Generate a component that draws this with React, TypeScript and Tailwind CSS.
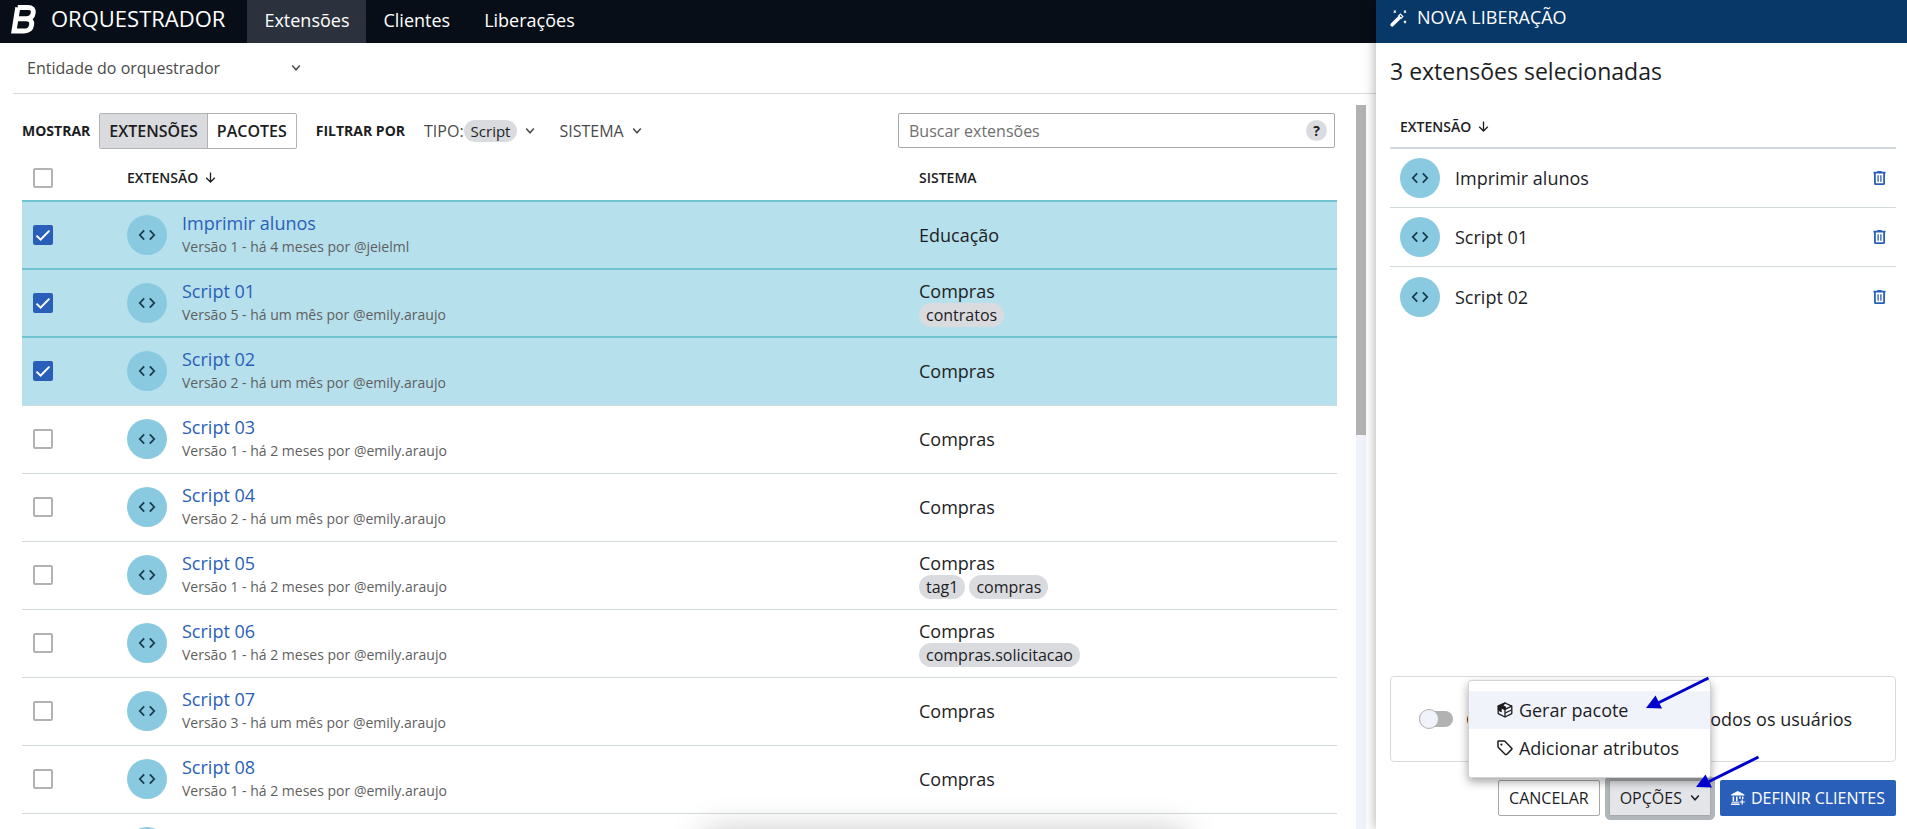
import { useState } from "react";

const rows = [
  { name: "Imprimir alunos", info: "Versão 1 - há 4 meses por @jeielml", system: "Educação", tags: [] as string[] },
  { name: "Script 01", info: "Versão 5 - há um mês por @emily.araujo", system: "Compras", tags: ["contratos"] },
  { name: "Script 02", info: "Versão 2 - há um mês por @emily.araujo", system: "Compras", tags: [] },
  { name: "Script 03", info: "Versão 1 - há 2 meses por @emily.araujo", system: "Compras", tags: [] },
  { name: "Script 04", info: "Versão 2 - há um mês por @emily.araujo", system: "Compras", tags: [] },
  { name: "Script 05", info: "Versão 1 - há 2 meses por @emily.araujo", system: "Compras", tags: ["tag1", "compras"] },
  { name: "Script 06", info: "Versão 1 - há 2 meses por @emily.araujo", system: "Compras", tags: ["compras.solicitacao"] },
  { name: "Script 07", info: "Versão 3 - há um mês por @emily.araujo", system: "Compras", tags: [] },
  { name: "Script 08", info: "Versão 1 - há 2 meses por @emily.araujo", system: "Compras", tags: [] },
  { name: "Script 09", info: "Versão 1 - há 2 meses por @emily.araujo", system: "Compras", tags: [] },
];

function Chevron({ className = "" }: { className?: string }) {
  return (
    <svg className={className} width="10" height="8" viewBox="0 0 10 8" fill="none" stroke="currentColor" strokeWidth="1.5" aria-hidden="true">
      <path d="M1.2 1.5 5 5.8 8.8 1.5" />
    </svg>
  );
}

function ArrowDown() {
  return (
    <svg width="11" height="11" viewBox="0 0 11 11" fill="none" stroke="currentColor" strokeWidth="1.3" aria-hidden="true">
      <path d="M5.5 0.5V10M1.2 5.8 5.5 10 9.8 5.8" />
    </svg>
  );
}

function CodeBadge() {
  return (
    <span className="flex size-10 shrink-0 items-center justify-center rounded-full bg-[#8acae0] text-[#163c4e]">
      <svg width="18" height="12" viewBox="0 0 18 12" fill="none" stroke="currentColor" strokeWidth="1.8" aria-hidden="true">
        <path d="M6.2 1.4 1.8 6l4.4 4.6M11.8 1.4 16.2 6l-4.4 4.6" />
      </svg>
    </span>
  );
}

function Check({ checked, label, onChange }: { checked: boolean; label: string; onChange: () => void }) {
  return (
    <span className="relative flex size-5">
      <input
        type="checkbox"
        aria-label={label}
        checked={checked}
        onChange={onChange}
        className="size-5 appearance-none rounded-[2px] border-2 border-[#b2b2b2] bg-white checked:border-[#2a5fb9] checked:bg-[#2a5fb9]"
      />
      {checked && (
        <svg className="pointer-events-none absolute inset-0" width="20" height="20" viewBox="0 0 20 20" fill="none" stroke="#fff" strokeWidth="2" aria-hidden="true">
          <path d="M3.5 10.6 7.6 14.6 16.4 5.6" />
        </svg>
      )}
    </span>
  );
}

function Trash() {
  return (
    <svg width="13" height="14" viewBox="0 0 13 14" fill="none" stroke="currentColor" aria-hidden="true">
      <path d="M0.5 1.6h12M4.3 0.8h4.4" strokeWidth="1.6" />
      <path d="M1.9 2v10.4q0 .7.7.7h7.8q.7 0 .7-.7V2" strokeWidth="1.8" />
      <path d="M5.1 4.2v6.6M7.9 4.2v6.6" strokeWidth="1.3" />
    </svg>
  );
}

function Wand() {
  return (
    <svg width="18" height="18" viewBox="0 0 18 18" fill="none" stroke="currentColor" aria-hidden="true">
      <path d="M2.200 15.800 9 9" strokeWidth="3.6" strokeLinecap="round" />
      <path d="m8.600 7 2.400 2.400 1.800-1.800-2.400-2.400z" strokeWidth="1.2" />
      <path d="m3.800 1.600 2 2M5.800 1.600l-2 2M14 1.600l2 2M16 1.600l-2 2M14 12l2 2M16 12l-2 2" strokeWidth="1.1" />
    </svg>
  );
}

function PackageIcon() {
  return (
    <svg width="16" height="16" viewBox="0 0 16 16" fill="none" stroke="currentColor" strokeWidth="1.3" strokeLinejoin="round" aria-hidden="true">
      <path d="M8 1 14.8 4.2V11.6L8 15 1.2 11.6V4.2z" />
      <path d="M1.2 4.2 8 7.4l6.8-3.2M8 7.4V15" />
      <path d="M8 1 1.2 4.2 8 7.4 8.600 5.400 5.5 3.6z" fill="currentColor" />
      <path d="M1.2 4.5 4.4 6v4L1.2 8.4z" fill="currentColor" strokeWidth="0.6" />
      <path d="M8.200 11 14.500 8" />
    </svg>
  );
}

function TagIcon() {
  return (
    <svg width="16" height="16" viewBox="0 0 16 16" fill="none" stroke="currentColor" strokeWidth="1.5" strokeLinejoin="round" aria-hidden="true">
      <path d="M1 1.4v5.2q0 .5.4.9l7 7q.6.5 1.2 0l5.1-5.1q.5-.6 0-1.2l-6.600-6.8q-.4-.4-1-.4H1.400q-.4 0-.4.4z" />
      <circle cx="4.4" cy="4.6" r="1.1" fill="currentColor" stroke="none" />
    </svg>
  );
}

function BankIcon() {
  return (
    <svg width="14" height="14" viewBox="0 0 14 14" fill="currentColor" aria-hidden="true">
      <path d="M6.8 0 13.4 3.4V4.6H.2V3.4zM1.6 5.6h1.5v4.6H1.6zM5 5.6h1.5v4.6H5zM8.2 5.6h1.5v2.2H8.2zM11 5.6h1.4V8H11zM.8 10.8h7v1H.8zM0 12.6h8.6V14H0z" />
      <path d="M10.6 8.4h1.2v2h2v1.2h-2v2h-1.2v-2h-2v-1.2h2z" />
    </svg>
  );
}

function Pointer({ className }: { className: string }) {
  return (
    <svg className={`pointer-events-none absolute z-20 ${className}`} width="66" height="36" viewBox="0 0 66 36" fill="#0000cd" stroke="#0000cd" aria-hidden="true">
      <path d="M63.500 2 12 27.500" strokeWidth="3" />
      <path d="M1 32 10.500 19.500 17 32.500z" stroke="none" />
    </svg>
  );
}

export default function App() {
  const [selected, setSelected] = useState<number[]>([0, 1, 2]);
  const toggle = (i: number) => setSelected((s) => (s.includes(i) ? s.filter((n) => n !== i) : [...s, i].sort((a, b) => a - b)));

  return (
    <div className="flex h-screen overflow-hidden bg-white font-['Open_Sans','Noto_Sans',sans-serif] text-lg text-[#1d1d1f]">
      <div className="relative flex min-w-0 flex-1 flex-col">
        <header className="flex h-[43px] shrink-0 bg-[#080e17] text-white">
          <a href="#" className="flex items-center pr-[22px] pl-[11px]">
            <svg width="26" height="29" viewBox="0 0 26 29" fill="none" stroke="currentColor" strokeWidth="5" strokeLinejoin="miter" className="mr-[14px] -mt-1" aria-hidden="true">
              <path d="M6.800 2.500H17Q23 2.500 22.200 8T15.500 13.700H6.500M15 13.700Q21.500 14 20.600 20T13 26H3L6.800 2.500" />
            </svg>
            <span className="-mt-2 text-[22px] leading-7">ORQUESTRADOR</span>
          </a>
          <nav className="flex">
            <a href="#" className="flex items-center bg-[#2b323d] px-[17px] pb-1">Extensões</a>
            <a href="#" className="flex items-center px-[17px] pb-1">Clientes</a>
            <a href="#" className="flex items-center px-[17px] pb-1">Liberações</a>
          </nav>
        </header>

        <div className="ml-[13px] flex h-[51px] shrink-0 items-center border-b border-[#d9dadd]">
          <button type="button" className="flex w-[290px] items-center justify-between pr-0.5 pl-[14px] text-base text-[#4a4a4a]">
            Entidade do orquestrador
            <Chevron />
          </button>
        </div>

        <div className="flex min-h-0 flex-1">
          <main className="min-w-0 flex-1 pl-[22px]">
            <div className="flex h-[73px] items-center pr-0.5 text-base">
              <span className="mr-[9px] text-sm font-bold">MOSTRAR</span>
              <div className="flex h-9 rounded-[2px] border border-[#b2b2b2] font-semibold">
                <button type="button" className="border-r border-[#b2b2b2] bg-[#dadbdf] px-[9px]">EXTENSÕES</button>
                <button type="button" className="px-[9px]">PACOTES</button>
              </div>
              <span className="mr-[19px] ml-[19px] text-sm font-bold">FILTRAR POR</span>
              <button type="button" className="flex items-center text-[#4a4a4a]">
                TIPO:
                <span className="mr-2 rounded-full bg-[#dadbdf] px-[7px] text-[15px] leading-[22px] text-[#1d1d1f]">Script</span>
                <Chevron />
              </button>
              <button type="button" className="ml-6 flex items-center gap-2 text-[#4a4a4a]">
                SISTEMA
                <Chevron />
              </button>
              <div className="ml-auto flex h-[35px] w-[437px] items-center rounded-[2px] border border-[#a8a8a8] pr-[7px] pl-2.5">
                <input type="search" aria-label="Buscar extensões" placeholder="Buscar extensões" className="min-w-0 flex-1 outline-none placeholder:text-[#707070]" />
                <span className="flex size-[21px] items-center justify-center rounded-full bg-[#dadbdf] text-sm font-bold">?</span>
              </div>
            </div>

            <table className="w-full table-fixed border-collapse text-left">
              <thead>
                <tr className="h-[34px] text-sm">
                  <th className="w-[105px] pb-3 pl-[11px]">
                    <Check checked={false} label="Selecionar todas" onChange={() => setSelected(rows.map((_, i) => i))} />
                  </th>
                  <th className="pb-3 font-semibold">
                    <span className="flex items-center gap-[7px]">EXTENSÃO <ArrowDown /></span>
                  </th>
                  <th className="w-[418px] pb-3 font-semibold">SISTEMA</th>
                </tr>
              </thead>
              <tbody>
                {rows.map((r, i) => {
                  const on = selected.includes(i);
                  return (
                    <tr key={r.name} className={on ? "h-[68px] border-t-2 border-[#6fc3d0] bg-[#b6e0ec]" : "h-[68px] border-t border-[#d3dade]"}>
                      <td className="pl-[11px]">
                        <Check checked={on} label={r.name} onChange={() => toggle(i)} />
                      </td>
                      <td>
                        <div className="flex items-center gap-[15px]">
                          <CodeBadge />
                          <div>
                            <a href="#" className="block leading-6 text-[#2a5fb9]">{r.name}</a>
                            <div className="text-sm leading-6 text-[#5f5f5f]">{r.info}</div>
                          </div>
                        </div>
                      </td>
                      <td className="leading-6">
                        {r.system}
                        {r.tags.length > 0 && (
                          <div className="flex gap-1">
                            {r.tags.map((t) => (
                              <span key={t} className="rounded-full bg-[#dadbdf] px-[7px] text-base leading-6">{t}</span>
                            ))}
                          </div>
                        )}
                      </td>
                    </tr>
                  );
                })}
              </tbody>
            </table>
          </main>
          <div className="mt-[11px] mr-[10px] ml-[19px] w-[10px] shrink-0 bg-[#f0f4fa]">
            <div className="h-[330px] bg-[#b2b2b2]" />
          </div>
        </div>
        <div className="pointer-events-none absolute -bottom-12 left-[710px] h-9 w-[470px] rounded-lg shadow-[0_0_34px_10px_rgba(0,0,0,0.22)]" />
      </div>

      <aside className="z-10 flex w-[531px] shrink-0 flex-col bg-white shadow-[0_0_12px_rgba(0,0,0,0.35)]">
        <div className="flex h-[43px] shrink-0 items-start gap-[9px] bg-[#073868] pt-[5px] pl-[14px] leading-6 text-white">
          <span className="pt-1"><Wand /></span>
          NOVA LIBERAÇÃO
        </div>
        <div className="flex min-h-0 flex-1 flex-col pr-[11px] pl-[14px]">
          <h2 className="mt-3 text-[23px] leading-8">3 extensões selecionadas</h2>
          <div className="mt-[26px] flex h-9 w-full items-start gap-[7px] border-b-2 border-[#d3dade] pt-1 pl-[10px] text-sm font-semibold">
            EXTENSÃO <span className="pt-1"><ArrowDown /></span>
          </div>
          <ul className="flex-1">
            {selected.map((i) => (
              <li key={i} className="flex h-[59px] items-center gap-[15px] border-b border-[#d3dade] px-[10px] last:border-b-0">
                <CodeBadge />
                <span className="flex-1">{rows[i].name}</span>
                <button type="button" aria-label={`Remover ${rows[i].name}`} className="text-[#2a5fb9]"><Trash /></button>
              </li>
            ))}
          </ul>

          <label className="flex h-[86px] items-center rounded-[4px] border border-[#d9dadd] pl-7">
            <input
              type="checkbox"
              role="switch"
              className="relative mr-[13px] h-4 w-[34px] shrink-0 appearance-none rounded-full bg-[#b2b2b2] before:absolute before:-top-0.5 before:left-0 before:size-5 before:rounded-full before:border before:border-[#b2b2b2] before:bg-[#f0f4fa]"
            />
            <span className="whitespace-nowrap">Compartilhar extensão com todos os usuários</span>
          </label>
          <div className="mt-[18px] mb-[13px] flex justify-end gap-[9px] text-base">
            <button type="button" className="h-9 rounded-[2px] border border-[#a8a8a8] px-[10px]">CANCELAR</button>
            <div className="relative">
              <button type="button" className="flex h-9 items-center gap-2 rounded-[2px] border border-[#a8a8a8] bg-[#e4e5e9] px-[10px] ring-4 ring-[#b0b6ba]">
                OPÇÕES <Chevron />
              </button>
              <div className="absolute right-0 bottom-[38px] z-10 w-[243px] rounded-[3px] border border-[#d3d3d6] bg-white py-[10px] text-lg shadow-[0_4px_10px_rgba(0,0,0,0.35)]">
                <button type="button" className="flex h-[38px] w-full items-center gap-1.5 bg-[#f0f4fa] pl-7"><PackageIcon />Gerar pacote</button>
                <button type="button" className="flex h-[38px] w-full items-center gap-1.5 pl-7"><TagIcon />Adicionar atributos</button>
              </div>
              <Pointer className="right-0 bottom-[104px]" />
              <Pointer className="-right-[50px] bottom-[25px]" />
            </div>
            <button type="button" className="flex h-9 items-center gap-1.5 rounded-[2px] bg-[#2a5fb9] px-[11px] text-white"><BankIcon />DEFINIR CLIENTES</button>
          </div>
        </div>
      </aside>
    </div>
  );
}
